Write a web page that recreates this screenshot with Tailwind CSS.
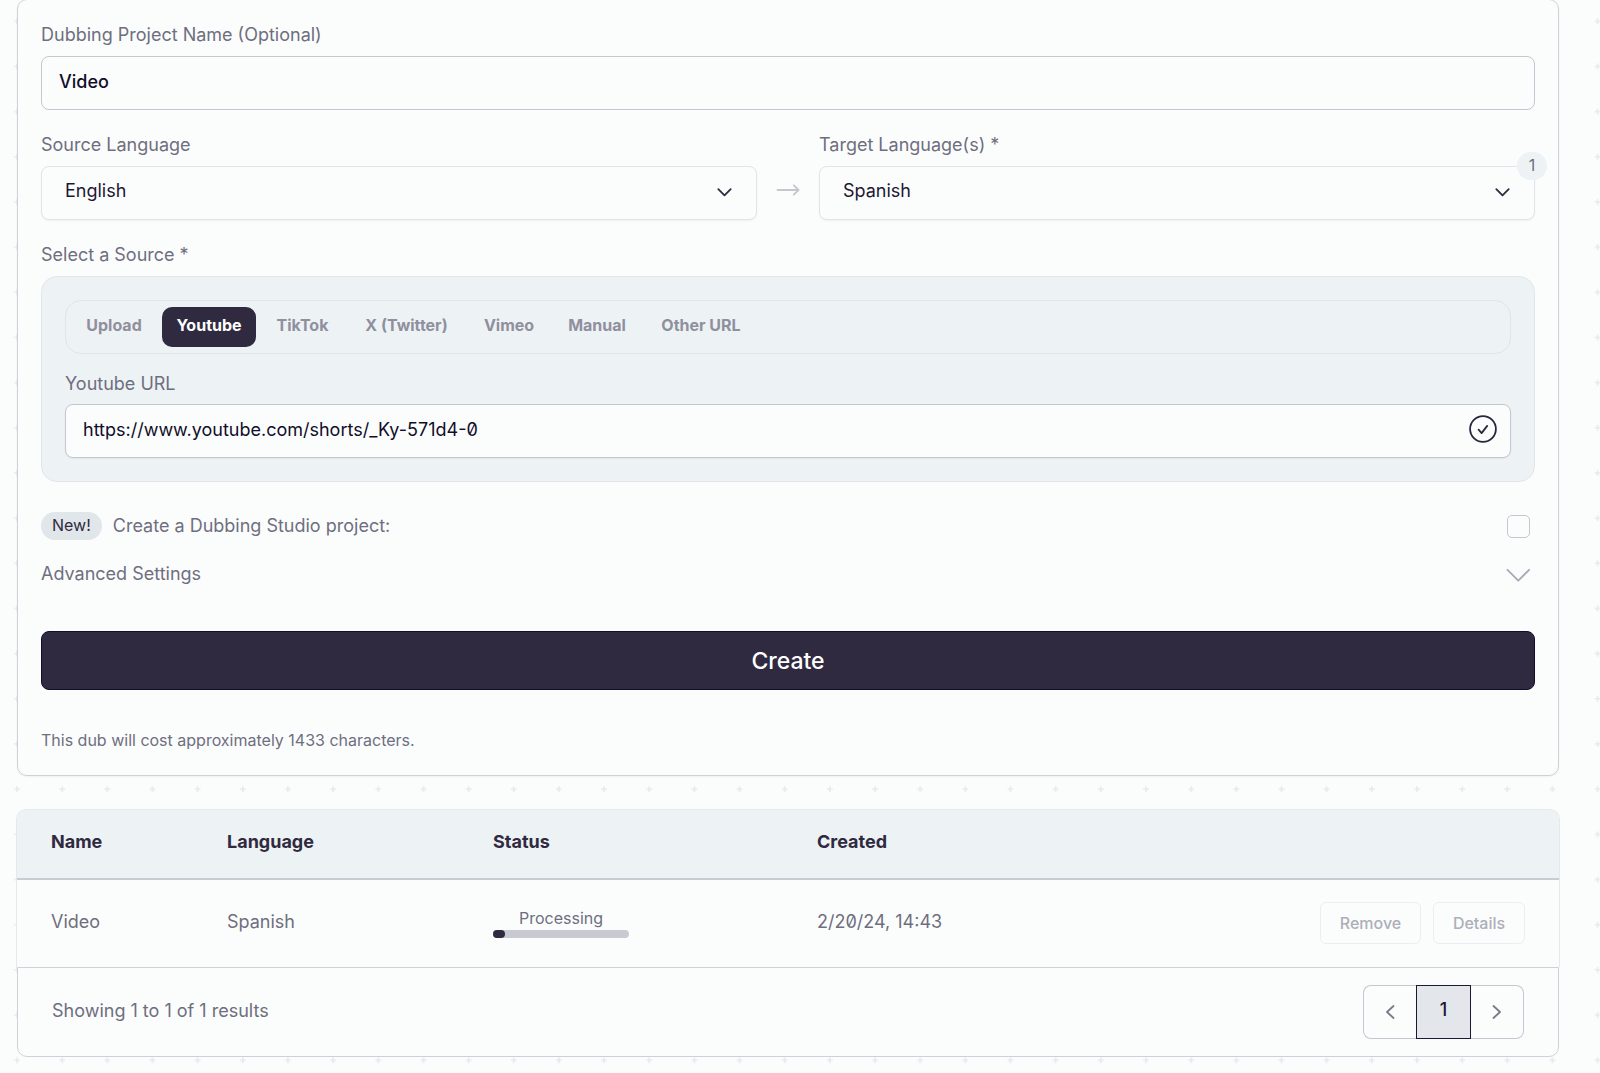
<!DOCTYPE html>
<html lang="en">
<head>
<meta charset="utf-8">
<meta name="viewport" content="width=device-width, initial-scale=1">
<title>Dubbing</title>
<script src="https://cdn.jsdelivr.net/npm/@tailwindcss/browser@4"></script>
</head>
<body class="relative isolate min-h-screen overflow-x-hidden bg-[#fbfdfc] font-['Inter','Liberation_Sans',sans-serif] text-lg leading-7 text-[#6f6e80]">
<!-- Plus-sign grid behind the page -->
<svg class="absolute inset-0 -z-10 h-full w-full" aria-hidden="true">
  <defs>
    <pattern id="plus" x="-5.5" y="-1.2" width="45.16" height="45.17" patternUnits="userSpaceOnUse">
      <path d="M19.5 22.5h6M22.5 19.5v6" stroke="#e5e6ea" stroke-width="1.3"/>
    </pattern>
  </defs>
  <rect width="100%" height="100%" fill="url(#plus)"/>
</svg>

<main class="pl-4 pr-10">
  <form class="mx-px -mt-px flex flex-col rounded-[10px] border border-[#cfd1da] bg-[#fbfdfc] px-[23px] pb-[21px] pt-[21px] shadow-xs" onsubmit="return false">
    <div class="flex flex-col gap-[7px]">
      <label for="name">Dubbing Project Name (Optional)</label>
      <input id="name" type="text" value="Video" class="h-[54px] w-full rounded-lg border border-[#c5c6d0] bg-[#fbfdfc] px-[17px] pb-1 font-medium text-[#120d2b]">
    </div>

    <div class="mt-[21px] grid grid-cols-[1fr_62px_1fr]">
      <div class="flex flex-col gap-[7px]">
        <label for="source">Source Language</label>
        <div class="relative">
          <select id="source" class="h-[54px] w-full appearance-none rounded-lg border border-[#e0e5ea] bg-[#fbfdfc] px-[23px] pb-1 text-[#1c1733] shadow-xs"><option>English</option></select>
          <svg class="pointer-events-none absolute right-6 top-[18px] size-4" viewBox="0 0 16 16" fill="none" stroke="#2f2a40" stroke-width="1.8" stroke-linecap="round" stroke-linejoin="round" aria-hidden="true"><path d="M1.300 5.200 7.500 11.400l6.200-6.200"/></svg>
        </div>
      </div>
      <div class="flex h-[54px] items-center justify-center self-end pb-1.5">
        <svg class="h-3 w-6" viewBox="0 0 24 12" fill="none" stroke="#c5c6cf" stroke-width="1.8" stroke-linecap="round" stroke-linejoin="round" aria-hidden="true"><path d="M1.5 6H22.5M17.8 1.3 22.6 6l-4.8 4.7"/></svg>
      </div>
      <div class="flex flex-col gap-[7px]">
        <label for="target">Target Language(s) *</label>
        <div class="relative">
          <select id="target" class="h-[54px] w-full appearance-none rounded-lg border border-[#e0e5ea] bg-[#fbfdfc] px-[23px] pb-1 text-[#1c1733] shadow-xs"><option>Spanish</option></select>
          <svg class="pointer-events-none absolute right-6 top-[18px] size-4" viewBox="0 0 16 16" fill="none" stroke="#2f2a40" stroke-width="1.8" stroke-linecap="round" stroke-linejoin="round" aria-hidden="true"><path d="M1.300 5.200 7.500 11.400l6.200-6.200"/></svg>
          <span class="absolute -right-3 -top-3.5 flex h-7 w-[30px] items-center justify-center rounded-full bg-[#edf2f5] pb-0.5 text-base">1</span>
        </div>
      </div>
    </div>

    <fieldset class="mt-[21px]">
      <legend class="mb-[7px]">Select a Source *</legend>
      <div class="flex flex-col rounded-2xl border border-[#e1e6eb] bg-[#edf2f5] px-[23px] pb-[23px] pt-[23px]">
        <div role="tablist" class="flex h-[54px] gap-1.5 rounded-2xl border border-[#e1e5ea] p-1.5 text-base font-bold text-[#908f9e]">
          <button type="button" role="tab" class="w-[84px] rounded-[10px] pb-1">Upload</button>
          <button type="button" role="tab" aria-selected="true" class="w-[94px] rounded-[10px] bg-[#302a40] pb-1 text-white">Youtube</button>
          <button type="button" role="tab" class="w-[81px] rounded-[10px] pb-1">TikTok</button>
          <button type="button" role="tab" class="w-[115px] rounded-[10px] pb-1">X (Twitter)</button>
          <button type="button" role="tab" class="w-[78px] rounded-[10px] pb-1">Vimeo</button>
          <button type="button" role="tab" class="w-[86px] rounded-[10px] pb-1">Manual</button>
          <button type="button" role="tab" class="w-[110px] rounded-[10px] pb-1">Other URL</button>
        </div>
        <label for="url" class="mb-1.5 mt-4">Youtube URL</label>
        <div class="relative">
          <input id="url" type="text" value="https://www.youtube.com/shorts/_Ky-571d4-0" class="h-[54px] w-full rounded-lg border border-[#c5c6d0] bg-[#fbfdfc] pb-1 pl-[17px] pr-14 slashed-zero text-[#120d2b] shadow-xs">
          <svg class="pointer-events-none absolute right-3.5 top-[11px] size-7" viewBox="0 0 28 28" fill="none" stroke="#2b2540" stroke-width="1.8" stroke-linecap="round" stroke-linejoin="round" aria-hidden="true"><circle cx="14" cy="14" r="12.9"/><path d="m9.6 14.7 3 3.4 5.6-7.2"/></svg>
        </div>
      </div>
    </fieldset>

    <div class="mt-[30px] flex h-7 items-center pr-[5px]">
      <span class="mr-[11px] flex h-7 items-center rounded-full bg-[#e1e6ea] px-[11px] pb-0.5 text-base text-[#302a40]">New!</span>
      <label for="studio">Create a Dubbing Studio project:</label>
      <input id="studio" type="checkbox" class="ml-auto size-[23px] appearance-none rounded-[5px] border border-[#c5c6d0]">
    </div>

    <button type="button" class="mt-5 flex h-7 items-center justify-between pr-[5px] text-left">
      <span>Advanced Settings</span>
      <svg class="h-4 w-6" viewBox="0 0 24 16" fill="none" stroke="#a9aab6" stroke-width="1.9" stroke-linecap="round" stroke-linejoin="round" aria-hidden="true"><path d="M1.5 3.8 12.3 14.6 23.1 3.8"/></svg>
    </button>

    <button type="submit" class="mt-[43px] h-[59px] rounded-lg border border-[#120d2b] bg-[#302a40] text-[23px] font-medium text-white">Create</button>

    <p class="mt-9 text-base leading-7">This dub will cost approximately 1433 characters.</p>
  </form>

  <section class="mt-[33px]">
    <div class="overflow-hidden rounded-t-[10px] border border-b-0 border-[#e4e9ee] bg-[#fbfdfc]">
      <table class="w-full table-fixed text-left">
        <thead class="bg-[#edf2f5] text-[#302a40]">
          <tr class="h-[69px] border-b-2 border-[#c9cbd5]">
            <th class="w-[176px] pb-1 pl-[34px]">Name</th>
            <th class="w-[266px] pb-1 pl-[34px]">Language</th>
            <th class="w-[324px] pb-1 pl-[34px]">Status</th>
            <th class="w-[324px] pb-1 pl-[34px]">Created</th>
            <th aria-label="Actions"></th>
          </tr>
        </thead>
        <tbody>
          <tr class="h-[88px]">
            <td class="pb-1 pl-[34px]">Video</td>
            <td class="pb-1 pl-[34px]">Spanish</td>
            <td class="pb-1 pl-[34px]">
              <div class="flex w-[136px] flex-col items-center">
                <span class="text-base leading-6">Processing</span>
                <div class="h-2 w-full rounded-full bg-[#c8cad3]"><div class="h-2 rounded-full bg-[#302a40]" style="width:9%"></div></div>
              </div>
            </td>
            <td class="pb-1 pl-[34px] slashed-zero">2/20/24, 14:43</td>
            <td class="pb-0.5 pr-[34px]">
              <div class="flex justify-end gap-3 text-base font-medium text-[#adaeba]">
                <button type="button" class="h-[42px] w-[101px] rounded-md border border-[#e9eef2]">Remove</button>
                <button type="button" class="h-[42px] w-[92px] rounded-md border border-[#e9eef2]">Details</button>
              </div>
            </td>
          </tr>
        </tbody>
      </table>
    </div>
    <div class="mx-px flex h-[90px] items-center justify-between rounded-b-[10px] border border-[#cfd1da] bg-[#fbfdfc] px-[34px] pb-px">
      <p class="pb-0.5">Showing 1 to 1 of 1 results</p>
      <nav class="flex h-[54px] rounded-lg" aria-label="Pagination">
        <button type="button" aria-label="Previous" class="flex w-[53px] items-center justify-center rounded-l-lg border border-r-0 border-[#c5c6d0]">
          <svg class="size-4" viewBox="0 0 16 16" fill="none" stroke="#7b798a" stroke-width="1.8" stroke-linecap="round" stroke-linejoin="round" aria-hidden="true"><path d="M11.5 2 5 8l6.500 6"/></svg>
        </button>
        <button type="button" aria-current="page" class="w-[55px] border border-[#1c1733] bg-[#e3e7eb] pb-1 font-medium text-[#1c1733]">1</button>
        <button type="button" aria-label="Next" class="flex w-[53px] items-center justify-center rounded-r-lg border border-l-0 border-[#c5c6d0]">
          <svg class="size-4" viewBox="0 0 16 16" fill="none" stroke="#7b798a" stroke-width="1.8" stroke-linecap="round" stroke-linejoin="round" aria-hidden="true"><path d="M4.500 2 11 8l-6.500 6"/></svg>
        </button>
      </nav>
    </div>
  </section>
</main>
</body>
</html>
